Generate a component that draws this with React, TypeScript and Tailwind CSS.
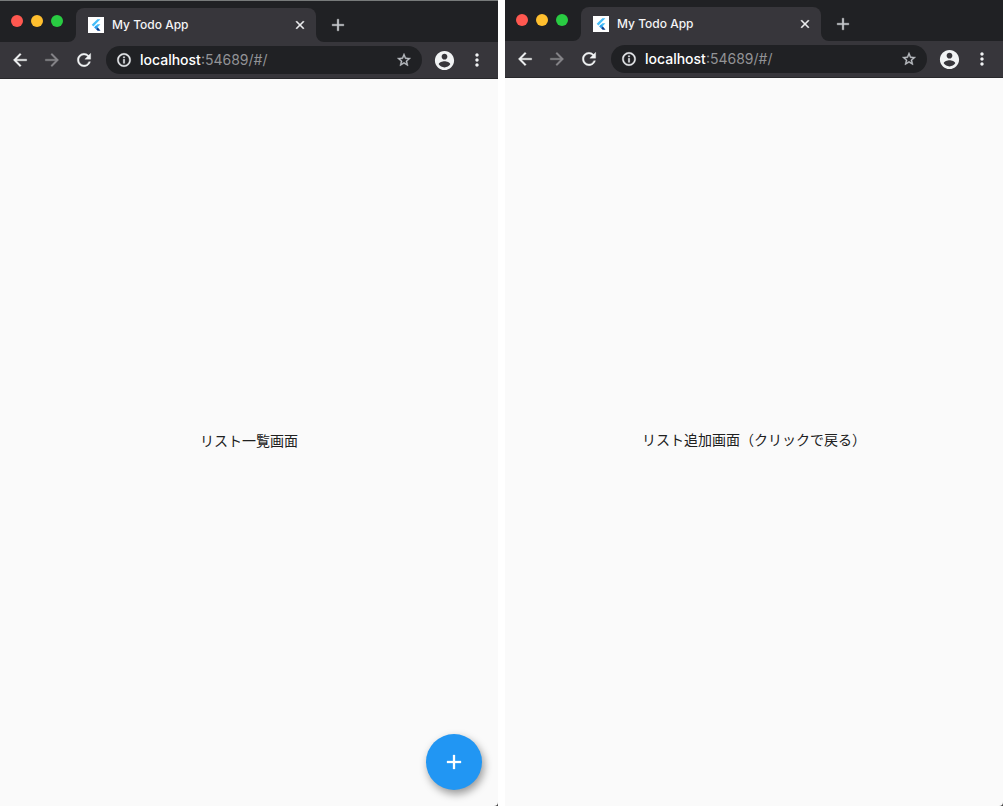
import type { ReactNode } from "react";

const paths = {
  add: "M19 13h-6v6h-2v-6H5v-2h6V5h2v6h6v2z",
  back: "M20 11H7.83l5.59-5.59L12 4l-8 8 8 8 1.41-1.41L7.83 13H20v-2z",
  forward: "M12 4l-1.41 1.41L16.17 11H4v2h12.17l-5.58 5.59L12 20l8-8z",
  close: "M19 6.41L17.59 5 12 10.59 6.41 5 5 6.41 10.59 12 5 17.59 6.41 19 12 13.41 17.59 19 19 17.59 13.41 12z",
  info: "M11 7h2v2h-2zm0 4h2v6h-2zm1-9C6.48 2 2 6.48 2 12s4.48 10 10 10 10-4.48 10-10S17.52 2 12 2zm0 18c-4.41 0-8-3.59-8-8s3.59-8 8-8 8 3.59 8 8-3.59 8-8 8z",
  more: "M12 8c1.1 0 2-.9 2-2s-.9-2-2-2-2 .9-2 2 .9 2 2 2zm0 2c-1.1 0-2 .9-2 2s.9 2 2 2 2-.9 2-2-.9-2-2-2zm0 6c-1.1 0-2 .9-2 2s.9 2 2 2 2-.9 2-2-.9-2-2-2z",
  refresh: "M17.65 6.35A7.958 7.958 0 0 0 12 4c-4.42 0-7.99 3.58-7.99 8s3.57 8 7.99 8c3.73 0 6.84-2.55 7.73-6h-2.08A5.99 5.99 0 0 1 12 18c-3.31 0-6-2.69-6-6s2.69-6 6-6c1.66 0 3.14.69 4.22 1.78L13 11h7V4l-2.35 2.35z",
  star: "M22 9.24l-7.19-.62L12 2 9.19 8.63 2 9.24l5.46 4.73L5.82 21 12 17.27 18.18 21l-1.63-7.03L22 9.24zM12 15.4l-3.76 2.27 1-4.28-3.32-2.88 4.38-.38L12 6.1l1.71 4.04 4.38.38-3.32 2.88 1 4.28L12 15.4z",
  account:
    "M12 2C6.48 2 2 6.48 2 12s4.48 10 10 10 10-4.48 10-10S17.52 2 12 2zm0 3c1.66 0 3 1.34 3 3s-1.34 3-3 3-3-1.34-3-3 1.34-3 3-3zm0 14.2c-2.5 0-4.71-1.28-6-3.22.03-1.99 4-3.08 6-3.08 1.99 0 5.97 1.09 6 3.08-1.29 1.94-3.5 3.22-6 3.22z",
};

function Icon({ name, className }: { name: keyof typeof paths; className: string }) {
  return (
    <svg viewBox="0 0 24 24" className={`shrink-0 overflow-visible ${className}`} fill="currentColor" stroke="currentColor" aria-hidden="true">
      <path d={paths[name]} />
    </svg>
  );
}

function FlutterLogo() {
  return (
    <svg viewBox="0 0 16 16" className="size-4 shrink-0 bg-white" aria-hidden="true">
      <path d="M9.4 2.2h3L5.4 9.4 3.7 7.8z" fill="#45bdf8" />
      <path d="M9.4 7.2h3L8.4 11.4 6.4 10.3z" fill="#45bdf8" />
      <path d="M6.2 10.4l1.8-1.8 1.9 1.9-1.8 1.8z" fill="#2a9df0" />
      <path d="M8.1 12.3l1.8-1.8 2.6 3.2H9.6z" fill="#053a8c" />
    </svg>
  );
}

function TabFoot({ flip = false }: { flip?: boolean }) {
  return (
    <svg viewBox="0 0 8 8" className={flip ? "size-2 -scale-x-100 self-end" : "size-2 self-end"} fill="#37363b" aria-hidden="true">
      <path d="M8 0v8H0a8 8 0 0 0 8-8z" />
    </svg>
  );
}

function IconButton({ label, children, className = "" }: { label: string; children: ReactNode; className?: string }) {
  return (
    <button type="button" aria-label={label} className={`flex shrink-0 items-center justify-center ${className}`}>
      {children}
    </button>
  );
}

function BrowserWindow({ children, className = "" }: { children: ReactNode; className?: string }) {
  return (
    <section className={`flex min-w-0 flex-1 flex-col bg-[#444444] ${className}`}>
      <div className="flex h-[41px] shrink-0 bg-[#202124] pt-[7px]">
        <div className="flex gap-2 pt-[7px] pr-[5px] pl-[11px]">
          <span className="size-3 rounded-full bg-[#ff5850]" />
          <span className="size-3 rounded-full bg-[#ffbf2e]" />
          <span className="size-3 rounded-full bg-[#29cc42]" />
        </div>
        <TabFoot />
        <div className="flex w-60 items-center rounded-t-lg bg-[#37363b] pr-2 pl-3">
          <FlutterLogo />
          <span className="flex-1 truncate pl-2 font-['Inter','Liberation_Sans',sans-serif] text-xs font-medium text-[#f4f4f5]">My Todo App</span>
          <IconButton label="Close tab" className="size-4 text-[#f1f3f4]">
            <Icon name="close" className="size-[14px] stroke-[0.8]" />
          </IconButton>
        </div>
        <TabFoot flip />
        <IconButton label="New tab" className="size-7 self-center text-[#c8cacf]">
          <Icon name="add" className="size-5 stroke-[0.4]" />
        </IconButton>
      </div>
      <div className="flex h-[37px] shrink-0 items-center border-b border-[#28282b] bg-[#37363b] pr-[9px] pl-2 text-[#f1f3f4]">
        <div className="flex gap-2 pr-[10px]">
          <IconButton label="Back" className="size-6"><Icon name="back" className="size-5 stroke-[0.4]" /></IconButton>
          <IconButton label="Forward" className="size-6 text-[#87868a]"><Icon name="forward" className="size-5 stroke-[0.4]" /></IconButton>
          <IconButton label="Reload" className="size-6"><Icon name="refresh" className="size-5 stroke-[0.4]" /></IconButton>
        </div>
        <div className="flex h-7 min-w-0 flex-1 items-center rounded-full bg-[#202124] px-2">
          <IconButton label="Site information" className="size-5 text-[#e8eaed]"><Icon name="info" className="size-4 stroke-[0.6]" /></IconButton>
          <span className="flex-1 truncate pl-[6px] font-['Inter','Liberation_Sans',sans-serif] text-sm text-[#929396]">
            <span className="font-medium text-white">localhost</span>:54689/#/
          </span>
          <IconButton label="Bookmark" className="size-5 text-[#bdc1c6]"><Icon name="star" className="size-4 stroke-[0.6]" /></IconButton>
        </div>
        <IconButton label="Profile" className="ml-[10px] size-6"><Icon name="account" className="size-[23px] stroke-0" /></IconButton>
        <IconButton label="Menu" className="ml-[9px] size-6"><Icon name="more" className="size-5 stroke-0" /></IconButton>
      </div>
      <main className="relative flex flex-1 items-center justify-center rounded-br-[4px] bg-[#fafafa] pb-[6px] font-['Noto_Sans_CJK_JP',sans-serif] text-sm text-[#202020]">
        {children}
      </main>
    </section>
  );
}

export default function App() {
  return (
    <div className="flex min-h-screen gap-[7px] bg-white pr-px">
      <BrowserWindow className="border-t border-[#777a7a]">
        <p>リスト一覧画面</p>
        <button type="button" aria-label="Add" className="absolute right-4 bottom-4 flex size-14 items-center justify-center rounded-full bg-[#2196f3] text-white shadow-[2px_4px_8px_rgba(0,0,0,0.4)]">
          <Icon name="add" className="size-6 stroke-[0.3]" />
        </button>
      </BrowserWindow>
      <BrowserWindow>
        <button type="button">リスト追加画面（クリックで戻る）</button>
      </BrowserWindow>
    </div>
  );
}
